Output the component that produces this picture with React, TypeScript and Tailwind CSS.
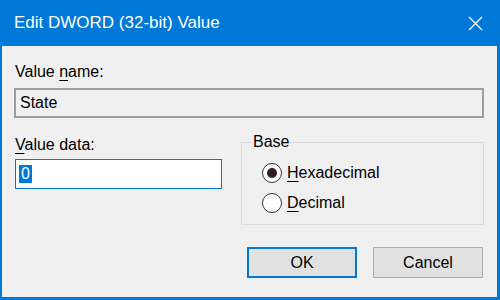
import React from 'react';

const font = { fontFamily: '"Liberation Sans", Arial, sans-serif' };

const Radio = ({ checked, label, hot }: { checked?: boolean; label: string; hot: string }) => (
    <div className="flex items-center h-[30px] pl-[20px]">
        <span className="w-[20px] h-[20px] rounded-full border border-[#333333] bg-white flex items-center justify-center">
            {checked && <span className="w-[10px] h-[10px] rounded-full bg-[#2e1c2c]" />}
        </span>
        <span className="ml-[5px] text-[16px] leading-[20px] text-black">
            <u className="underline-offset-[3px]">{hot}</u>{label.slice(hot.length)}
        </span>
    </div>
);

const App: React.FC = () => {
    return (
        <div style={font} className="w-[500px] h-[300px] flex flex-col bg-[#0078d7]">
            {/* title bar */}
            <div className="h-[46px] flex items-center justify-between pl-[14px] pr-[17px] text-white">
                <span className="text-[17px] leading-[20px]">Edit DWORD (32-bit) Value</span>
                <svg width="15" height="15" viewBox="0 0 15 15" fill="none">
                    <path d="M1 1 14 14M14 1 1 14" stroke="white" strokeWidth="1.3" />
                </svg>
            </div>
            {/* dialog body */}
            <div className="flex-1 ml-[2px] mr-[3px] mb-[3px] bg-[#f0f0f0] pt-[16px] pl-[12px] text-black">
                <div className="text-[16px] leading-[20px] pl-[1px]">
                    Value <u className="underline-offset-[3px]">n</u>ame:
                </div>
                <div className="mt-[6px] w-[470px] h-[30px] border-2 border-[#9d9d9d] bg-[#f0f0f0] flex items-center pl-[4px] text-[16px]">
                    State
                </div>
                <div className="flex mt-[14px]">
                    <div className="w-[227px] pt-[3px]">
                        <div className="text-[16px] leading-[20px] pl-[1px]">
                            <u className="underline-offset-[3px]">V</u>alue data:
                        </div>
                        <div className="mt-[4px] ml-[1px] w-[207px] h-[30px] border border-[#0078d7] bg-white flex items-center pl-[3px]">
                            <span className="bg-[#0078d7] text-white text-[16px] leading-[18px] px-[2px]">0</span>
                        </div>
                    </div>
                    <fieldset className="w-[243px] h-[93px] border border-[#d9d9d9] pb-[7px]">
                        <legend className="ml-[10px] px-[1px] text-[16px] leading-[20px]">Base</legend>
                        <div className="mt-[6px]">
                            <Radio checked label="Hexadecimal" hot="H" />
                            <Radio label="Decimal" hot="D" />
                        </div>
                    </fieldset>
                </div>
                <div className="flex justify-end gap-[16px] mt-[22px] pr-[14px]">
                    <button className="w-[110px] h-[31px] border-2 border-[#0078d7] bg-[#e1e1e1] text-[16px] text-black">OK</button>
                    <button className="w-[110px] h-[31px] border border-[#adadad] bg-[#e1e1e1] text-[16px] text-black">Cancel</button>
                </div>
            </div>
        </div>
    );
};

export default App;
